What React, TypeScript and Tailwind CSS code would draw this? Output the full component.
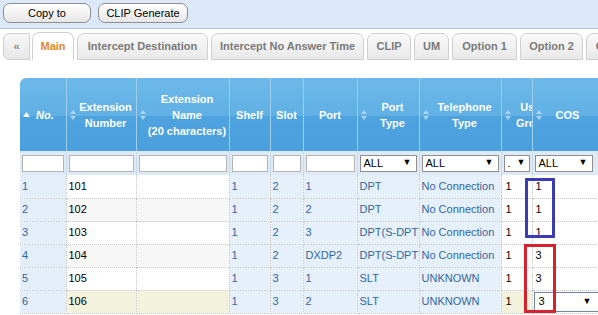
import React from "react";

const F = { fontFamily: '"Liberation Sans", Arial, sans-serif' };

function SortIcon() {
  return (
    <svg width="6" height="10" viewBox="0 0 6 10" className="shrink-0">
      <path d="M3 0 L6 4 L0 4 Z" fill="#a9d6f5" />
      <path d="M3 10 L6 6 L0 6 Z" fill="#a9d6f5" />
    </svg>
  );
}

function UpIcon() {
  return (
    <svg width="7" height="5" viewBox="0 0 7 5" className="shrink-0">
      <path d="M3.5 0 L7 5 L0 5 Z" fill="#ffffff" />
    </svg>
  );
}

const tabs: { label: string; w: number }[] = [
  { label: "Main", w: 42 },
  { label: "Intercept Destination", w: 131 },
  { label: "Intercept No Answer Time", w: 153 },
  { label: "CLIP", w: 44 },
  { label: "UM", w: 35 },
  { label: "Option 1", w: 65 },
  { label: "Option 2", w: 63 },
  { label: "Option 3", w: 64 },
];

const rows = [
  { no: "1", ext: "101", shelf: "1", slot: "2", port: "1", ptype: "DPT", ttype: "No Connection", ug: "1", cos: "1" },
  { no: "2", ext: "102", shelf: "1", slot: "2", port: "2", ptype: "DPT", ttype: "No Connection", ug: "1", cos: "1" },
  { no: "3", ext: "103", shelf: "1", slot: "2", port: "3", ptype: "DPT(S-DPT)", ttype: "No Connection", ug: "1", cos: "1" },
  { no: "4", ext: "104", shelf: "1", slot: "2", port: "DXDP2", ptype: "DPT(S-DPT)", ttype: "No Connection", ug: "1", cos: "3" },
  { no: "5", ext: "105", shelf: "1", slot: "3", port: "1", ptype: "SLT", ttype: "UNKNOWN", ug: "1", cos: "3" },
  { no: "6", ext: "106", shelf: "1", slot: "3", port: "2", ptype: "SLT", ttype: "UNKNOWN", ug: "1", cos: "3" },
];

const hdr =
  "bg-[linear-gradient(to_bottom,#6cb8e8_0%,#60b0e5_52%,#4ea3df_52%,#4a9fdc_100%)] border-r border-[#9fcdee] text-white font-bold text-[11px] leading-[16px] p-0 align-middle overflow-hidden whitespace-nowrap";

function Select({ text, w }: { text: string; w: string }) {
  return (
    <div className={`h-[17px] ${w} bg-white border border-[#8f8f8f] flex items-center justify-between pl-[3px] pr-[4px] text-[11px] text-black`}>
      <span>{text}</span>
      <span className="text-[9px]">▼</span>
    </div>
  );
}

export default function App() {
  const cols = [46, 70, 93, 41, 33, 54, 62, 82, 31, 80];
  const blueCell = "bg-[#e5f0fb] text-[#33669b]";
  const sep = "border-r border-dotted border-[#b8b8b8]";
  return (
    <div className="relative w-[598px] h-[315px] overflow-hidden bg-white" style={F}>
      {/* top bar */}
      <div className="h-[29px] bg-[#dce9fa] border-b border-[#b3c6de] flex items-start gap-[7px] pl-[3px] pt-[3px]">
        <button className="h-[20px] w-[88px] rounded-[7px] border border-[#8e8e8e] bg-[linear-gradient(to_bottom,#ffffff,#e6e6e6)] text-[11px] text-black leading-none">
          Copy to
        </button>
        <button className="h-[20px] w-[90px] rounded-[7px] border border-[#8e8e8e] bg-[linear-gradient(to_bottom,#ffffff,#e6e6e6)] text-[11px] text-black leading-none">
          CLIP Generate
        </button>
      </div>
      {/* tabs */}
      <div className="flex items-end h-[31px] pl-[3px] whitespace-nowrap">
        <div className="h-[27px] w-[27px] mr-[2px] shrink-0 rounded-l-[6px] rounded-tr-[2px] border border-[#cfcfcf] bg-[linear-gradient(to_bottom,#f7f7f7,#e7e7e7)] flex items-center justify-center text-[11px] text-[#8a8a8a] font-bold">
          «
        </div>
        {tabs.map((t, i) => (
          <div
            key={t.label}
            style={{ width: t.w }}
            className={
              i === 0
                ? "h-[28px] shrink-0 mr-[3px] rounded-t-[7px] border border-b-0 border-[#d0d0d0] bg-white flex items-center justify-center text-[11px] font-bold text-[#e18a20]"
                : "h-[27px] shrink-0 mr-[3px] rounded-t-[7px] border border-[#cfcfcf] bg-[linear-gradient(to_bottom,#f9f9f9,#e9e9e9)] flex items-center justify-center text-[11px] font-bold text-[#7a7a7a]"
            }
          >
            {t.label}
          </div>
        ))}
      </div>
      {/* table */}
      <div className="ml-[20px] mt-[18px] w-[640px] rounded-tl-[6px] overflow-hidden">
        <table className="table-fixed border-collapse" style={{ width: cols.reduce((a, b) => a + b, 0) }}>
          <colgroup>
            {cols.map((c, i) => (
              <col key={i} style={{ width: c }} />
            ))}
          </colgroup>
          <thead>
            <tr className="h-[73px]">
              <th className={hdr}>
                <div className="flex items-center pl-[3px] gap-[6px]">
                  <UpIcon />
                  <span className="italic">No.</span>
                </div>
              </th>
              <th className={hdr}>
                <div className="flex items-center pl-[3px]">
                  <SortIcon />
                  <span className="flex-1 text-center">
                    Extension
                    <br />
                    Number
                  </span>
                </div>
              </th>
              <th className={hdr}>
                <div className="flex items-center pl-[3px]">
                  <SortIcon />
                  <span className="flex-1 text-center">
                    Extension
                    <br />
                    Name
                    <br />
                    (20 characters)
                  </span>
                </div>
              </th>
              <th className={hdr}>Shelf</th>
              <th className={hdr}>Slot</th>
              <th className={hdr}>Port</th>
              <th className={hdr}>
                <div className="flex items-center pl-[3px]">
                  <SortIcon />
                  <span className="flex-1 text-center">
                    Port
                    <br />
                    Type
                  </span>
                </div>
              </th>
              <th className={hdr}>
                <div className="flex items-center pl-[3px]">
                  <SortIcon />
                  <span className="flex-1 text-center">
                    Telephone
                    <br />
                    Type
                  </span>
                </div>
              </th>
              <th className={hdr}>
                <div className="flex items-center pl-[3px]">
                  <SortIcon />
                  <span className="ml-[4px] w-[36px] shrink-0 text-center">
                    User
                    <br />
                    Group
                  </span>
                </div>
              </th>
              <th className={hdr}>
                <div className="flex items-center pl-[3px]">
                  <SortIcon />
                  <span className="ml-[14px]">COS</span>
                </div>
              </th>
            </tr>
            <tr className="h-[24px] bg-[#deebf6]">
              {cols.map((_, i) => {
                let inner: React.ReactNode = <div className="h-[17px] w-full bg-white border border-[#b4b4b4]" />;
                if (i === 6) inner = <Select text="ALL" w="w-full" />;
                if (i === 7) inner = <Select text="ALL" w="w-full" />;
                if (i === 8)
                  inner = (
                    <div className="h-[17px] w-full bg-white border border-[#8f8f8f] flex items-center justify-between pl-[3px] pr-[3px] text-[11px] overflow-hidden">
                      <span>.</span>
                      <span className="text-[9px]">▼</span>
                    </div>
                  );
                if (i === 9) inner = <Select text="ALL" w="w-[58px]" />;
                return (
                  <td key={i} className="px-[2px] border-r border-[#c9dcee] align-middle">
                    {inner}
                  </td>
                );
              })}
            </tr>
          </thead>
          <tbody className="text-[11px]">
            {rows.map((r, idx) => {
              const sel = idx === 5;
              const alt = idx % 2 === 1;
              const extBg = sel ? "bg-[#f3f2dc]" : alt ? "bg-[#f7f7f7]" : "bg-white";
              const td = "h-[23px] px-[2px] border-b border-[#c6c6c6] whitespace-nowrap overflow-hidden align-middle";
              return (
                <tr key={r.no}>
                  <td className={`${td} ${sep} bg-[#e3eefa] text-[#33669b]`}>{r.no}</td>
                  <td className={`${td} ${sep} ${extBg} text-black`}>{r.ext}</td>
                  <td className={`${td} ${sep} ${extBg}`}></td>
                  <td className={`${td} ${sep} ${blueCell}`}>{r.shelf}</td>
                  <td className={`${td} ${sep} ${blueCell}`}>{r.slot}</td>
                  <td className={`${td} ${sep} ${blueCell}`}>{r.port}</td>
                  <td className={`${td} ${sep} ${blueCell} text-clip`}>{r.ptype}</td>
                  <td className={`${td} ${sep} ${blueCell}`}>{r.ttype}</td>
                  <td className={`${td} ${sep} ${sel ? "bg-[#f3f2dc]" : "bg-white"} text-black pl-[4px]`}>{r.ug}</td>
                  <td className={`${td} ${sep} bg-white text-black`}>
                    {sel ? (
                      <div className="h-[20px] w-[65px] -ml-[1px] border border-[#7486a8] bg-white flex items-center justify-between pl-[4px] pr-[6px]">
                        <span>{r.cos}</span>
                        <span className="text-[9px]">▼</span>
                      </div>
                    ) : (
                      <span className="pl-[1px]">{r.cos}</span>
                    )}
                  </td>
                </tr>
              );
            })}
          </tbody>
        </table>
      </div>
      {/* annotations */}
      <div className="absolute left-[525px] top-[178px] w-[30px] h-[60px] border-[3px] border-[#3a3cb6]" />
      <div className="absolute left-[524px] top-[244px] w-[32px] h-[69px] border-[3px] border-[#d8212c]" />
    </div>
  );
}
